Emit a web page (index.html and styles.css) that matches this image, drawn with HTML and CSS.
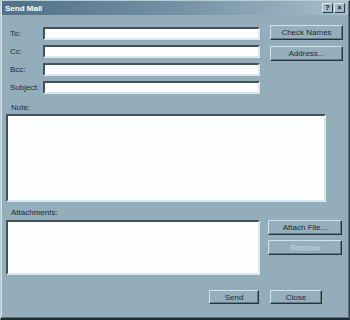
FILE: index.html
```html
<!DOCTYPE html>
<html lang="en">
<head>
  <meta charset="UTF-8">
  <title>Send Mail</title>
  <link rel="stylesheet" href="styles.css">
</head>
<body>
  <div class="window">
    <div class="titlebar">
      <span class="title">Send Mail</span>
      <div class="title-buttons">
        <span class="tbtn">?</span>
        <span class="tbtn">&times;</span>
      </div>
    </div>

    <div class="content">
      <div class="top">
        <div class="fields">
          <div class="row first">
            <label for="to">To:</label>
            <input type="text" id="to" class="field">
          </div>
          <div class="row">
            <label for="cc">Cc:</label>
            <input type="text" id="cc" class="field">
          </div>
          <div class="row">
            <label for="bcc">Bcc:</label>
            <input type="text" id="bcc" class="field">
          </div>
          <div class="row">
            <label for="subject">Subject:</label>
            <input type="text" id="subject" class="field">
          </div>
        </div>
        <div class="side-buttons">
          <button class="btn">Check Names</button>
          <button class="btn">Address...</button>
        </div>
      </div>

      <div class="section-label note-label">Note:</div>
      <textarea class="note"></textarea>

      <div class="section-label attach-label">Attachments:</div>
      <div class="attach-row">
        <div class="attach-list"></div>
        <div class="attach-buttons">
          <button class="btn">Attach File...</button>
          <button class="btn" disabled>Remove</button>
        </div>
      </div>

      <div class="footer">
        <button class="btn send">Send</button>
        <button class="btn close">Close</button>
      </div>
    </div>
  </div>
</body>
</html>
```

FILE: styles.css
```css
body {
  margin: 0;
  font-family: "Liberation Sans", Arial, sans-serif;
  font-size: 8px;
  color: #222c31;
  background-color: #93adba;
}
.window {
  box-sizing: border-box;
  width: 350px;
  height: 320px;
  background-color: #93adba;
  border: 1px solid;
  border-color: #b9cdd7 #2c3c45 #1f2c33 #b9cdd7;
  border-bottom-width: 2px;
  box-shadow: inset -1px -1px 0 #5d7480, inset 1px 1px 0 #d4e2e9;
}
.titlebar {
  height: 14px;
  margin: 0 1px;
  display: flex;
  align-items: center;
  justify-content: space-between;
  background: linear-gradient(to right, #4f7088, #7894a7 55%, #a8bfcc);
}
.title {
  color: #fff;
  font-weight: bold;
  font-size: 8px;
  padding-left: 3px;
}
.title-buttons {
  display: flex;
  gap: 1px;
  padding-right: 3px;
}
.tbtn {
  width: 9px;
  height: 8px;
  line-height: 8px;
  text-align: center;
  font-size: 7px;
  font-weight: bold;
  color: #111;
  background-color: #a3bac6;
  border: 1px solid;
  border-color: #dfe9ee #2c3c45 #2c3c45 #dfe9ee;
}
.content {
  padding: 0 4px 0 5px;
}
.top {
  display: flex;
  margin-top: 10px;
}
.fields {
  width: 254px;
  padding-top: 2px;
}
.row {
  display: flex;
  align-items: center;
  height: 13px;
  margin-top: 5px;
}
.row.first {
  margin-top: 0;
  margin-bottom: 2px;
}
.row label {
  width: 33px;
  padding-left: 4px;
}
.field,
.note,
.attach-list {
  box-sizing: border-box;
  margin: 0;
  padding: 0;
  background-color: #fcfdff;
  border: 2px solid;
  border-color: #3f525d #dce7ec #dce7ec #3f525d;
  outline: none;
  resize: none;
}
.field {
  width: 217px;
  height: 13px;
}
.side-buttons {
  margin-left: 10px;
  display: flex;
  flex-direction: column;
  gap: 6px;
}
.btn {
  box-sizing: border-box;
  width: 73px;
  height: 15px;
  padding: 0;
  font-family: "Liberation Sans", Arial, sans-serif;
  font-size: 8px;
  color: #222c31;
  background-color: #95afbc;
  border: 1px solid;
  border-color: #d3e1e8 #26343c #26343c #d3e1e8;
  box-shadow: inset -1px -1px 0 #61798a;
}
.btn:disabled {
  color: #c4d4dc;
  text-shadow: 1px 1px 0 #a9bfca;
}
.section-label {
  height: 10px;
  line-height: 10px;
  padding-left: 5px;
}
.note-label {
  margin-top: 9px;
}
.note {
  display: block;
  width: 320px;
  height: 88px;
  margin-top: 1px;
}
.attach-label {
  margin-top: 6px;
}
.attach-row {
  display: flex;
  margin-top: 2px;
}
.attach-list {
  width: 254px;
  height: 55px;
}
.attach-buttons {
  margin-left: 8px;
  display: flex;
  flex-direction: column;
  gap: 5px;
}
.attach-buttons .btn {
  width: 74px;
}
.footer {
  display: flex;
  margin-top: 15px;
  padding-left: 203px;
  gap: 11px;
}
.footer .btn {
  height: 14px;
}
.send {
  width: 50px;
}
.btn.close {
  width: 52px;
}
```
